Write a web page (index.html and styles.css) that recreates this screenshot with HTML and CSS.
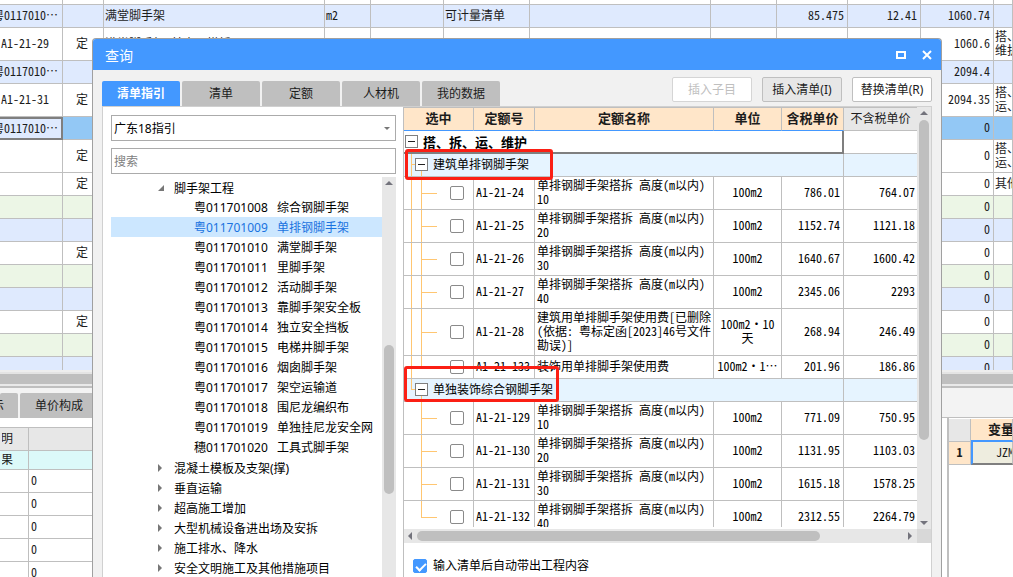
FILE: index.html
```html
<!DOCTYPE html>
<html lang="zh-CN">
<head>
<meta charset="utf-8">
<title>查询</title>
<link rel="stylesheet" href="styles.css">
</head>
<body>
<div class="app">
  <div class="sheet-view">
    <table class="sheet">
      <colgroup><col class="w-code"><col class="w-kind"><col class="w-name"><col class="w-unit"><col class="w-expr"><col class="w-type"><col><col class="w-qty"><col class="w-rate"><col class="w-price"><col class="w-price"><col class="w-note"></colgroup>
      <tbody>
        <tr class="sliver"><td></td><td></td><td></td><td></td><td></td><td></td><td></td><td></td><td></td><td></td><td></td><td></td></tr>
        <tr class="blue"><td><div class="code">粤0117010⋯</div></td><td></td><td>满堂脚手架</td><td>m2</td><td></td><td>可计量清单</td><td></td><td></td><td class="num">85.475</td><td class="num">12.41</td><td class="num">1060.74</td><td></td></tr>
        <tr class="tall"><td><div class="code">A1-21-29</div></td><td class="kind">定</td><td>满堂脚手架 基本层搭拆</td><td></td><td></td><td></td><td></td><td></td><td></td><td></td><td class="num">1060.6</td><td>搭、拆、运、<br>维护</td></tr>
        <tr class="blue"><td><div class="code">粤0117010⋯</div></td><td></td><td></td><td></td><td></td><td></td><td></td><td></td><td></td><td></td><td class="num">2094.4</td><td></td></tr>
        <tr class="tall"><td><div class="code">A1-21-31</div></td><td class="kind">定</td><td></td><td></td><td></td><td></td><td></td><td></td><td></td><td></td><td class="num">2094.35</td><td>搭、拆、<br>运、维护</td></tr>
        <tr class="current"><td class="focus"><div class="code">粤0117010⋯</div></td><td></td><td></td><td></td><td></td><td></td><td></td><td></td><td></td><td></td><td class="num">0</td><td></td></tr>
        <tr class="tall"><td></td><td class="kind">定</td><td></td><td></td><td></td><td></td><td></td><td></td><td></td><td></td><td class="num">0</td><td>搭、拆、<br>运、维护</td></tr>
        <tr><td></td><td class="kind">定</td><td></td><td></td><td></td><td></td><td></td><td></td><td></td><td></td><td class="num">0</td><td>其他</td></tr>
        <tr class="green"><td></td><td></td><td></td><td></td><td></td><td></td><td></td><td></td><td></td><td></td><td class="num">0</td><td></td></tr>
        <tr class="blue"><td></td><td></td><td></td><td></td><td></td><td></td><td></td><td></td><td></td><td></td><td class="num">0</td><td></td></tr>
        <tr><td></td><td class="kind">定</td><td></td><td></td><td></td><td></td><td></td><td></td><td></td><td></td><td class="num">0</td><td></td></tr>
        <tr class="green"><td></td><td></td><td></td><td></td><td></td><td></td><td></td><td></td><td></td><td></td><td class="num">0</td><td></td></tr>
        <tr class="blue"><td></td><td></td><td></td><td></td><td></td><td></td><td></td><td></td><td></td><td></td><td class="num">0</td><td></td></tr>
        <tr><td></td><td class="kind">定</td><td></td><td></td><td></td><td></td><td></td><td></td><td></td><td></td><td class="num">0</td><td></td></tr>
        <tr class="green"><td></td><td></td><td></td><td></td><td></td><td></td><td></td><td></td><td></td><td></td><td class="num">0</td><td></td></tr>
        <tr class="blue"><td></td><td></td><td></td><td></td><td></td><td></td><td></td><td></td><td></td><td></td><td class="num">0</td><td></td></tr>
      </tbody>
    </table>
  </div>
  <div class="sheet-scroll"></div>
  <div class="lower">
    <section class="detail">
      <div class="detail-tabs"><button class="detail-tab first">显示</button><button class="detail-tab">单价构成</button></div>
      <table class="detail-table">
        <tbody>
          <tr class="head"><td><div class="code">说明</div></td><td></td></tr>
          <tr class="result"><td><div class="code">结果</div></td><td></td></tr>
          <tr><td></td><td>0</td></tr>
          <tr><td></td><td>0</td></tr>
          <tr><td></td><td>0</td></tr>
          <tr><td></td><td>0</td></tr>
          <tr><td></td><td>0</td></tr>
        </tbody>
      </table>
    </section>
    <section class="vars">
      <div class="vars-bar"></div>
      <div class="vars-body">
        <table class="vars-table">
          <thead><tr><th class="corner"></th><th class="var-head">变量</th></tr></thead>
          <tbody><tr><th class="row-no">1</th><td class="var-cell">JZMJ</td></tr></tbody>
        </table>
      </div>
    </section>
  </div>
</div>

<div class="dialog" role="dialog" aria-label="查询">
  <header class="title-bar">
    <h1>查询</h1>
    <button class="win-btn" aria-label="最大化"><svg width="12" height="12" viewBox="0 0 12 12"><path d="M2 3h8v6H2z" fill="none" stroke="#fff" stroke-width="2"/></svg></button>
    <button class="win-btn" aria-label="关闭"><svg width="12" height="12" viewBox="0 0 12 12"><path d="M2 2l8 8M10 2l-8 8" fill="none" stroke="#fff" stroke-width="2"/></svg></button>
  </header>
  <div class="toolbar">
    <nav class="tabs">
      <button class="tab active">清单指引</button><button class="tab">清单</button><button class="tab">定额</button><button class="tab">人材机</button><button class="tab">我的数据</button>
    </nav>
    <div class="actions">
      <button class="action" disabled>插入子目</button><button class="action pressed">插入清单(I)</button><button class="action">替换清单(R)</button>
    </div>
  </div>
  <main class="panel">
    <aside class="guide">
      <div class="picker">
        <select class="field" aria-label="指引"><option>广东18指引</option></select>
        <svg class="picker-arrow" width="6" height="3" viewBox="0 0 6 3"><path d="M0 0h6L3 3z" fill="#777"/></svg>
      </div>
      <input class="field" type="text" placeholder="搜索" aria-label="搜索">
      <div class="tree-view">
        <ul class="tree">
          <li class="node open">脚手架工程</li>
          <li class="leaf"><span class="no">粤011701008</span>综合钢脚手架</li>
          <li class="leaf selected"><span class="no">粤011701009</span>单排钢脚手架</li>
          <li class="leaf"><span class="no">粤011701010</span>满堂脚手架</li>
          <li class="leaf"><span class="no">粤011701011</span>里脚手架</li>
          <li class="leaf"><span class="no">粤011701012</span>活动脚手架</li>
          <li class="leaf"><span class="no">粤011701013</span>靠脚手架安全板</li>
          <li class="leaf"><span class="no">粤011701014</span>独立安全挡板</li>
          <li class="leaf"><span class="no">粤011701015</span>电梯井脚手架</li>
          <li class="leaf"><span class="no">粤011701016</span>烟囱脚手架</li>
          <li class="leaf"><span class="no">粤011701017</span>架空运输道</li>
          <li class="leaf"><span class="no">粤011701018</span>围尼龙编织布</li>
          <li class="leaf"><span class="no">粤011701019</span>单独挂尼龙安全网</li>
          <li class="leaf"><span class="no">穗011701020</span>工具式脚手架</li>
          <li class="node">混凝土模板及支架(撑)</li>
          <li class="node">垂直运输</li>
          <li class="node">超高施工增加</li>
          <li class="node">大型机械设备进出场及安拆</li>
          <li class="node">施工排水、降水</li>
          <li class="node">安全文明施工及其他措施项目</li>
        </ul>
        <div class="vscroll"><svg width="8" height="4" viewBox="0 0 8 4"><path d="M0 4h8L4 0z" fill="#73737c"/></svg><div class="thumb tree-thumb"></div></div>
      </div>
    </aside>
    <section class="quota">
      <div class="grid-view">
        <div class="grid-clip">
          <table class="grid">
            <colgroup><col class="g-pick"><col class="g-code"><col><col class="g-unit"><col class="g-price"><col class="g-net"></colgroup>
            <thead><tr><th>选中</th><th>定额号</th><th>定额名称</th><th>单位</th><th>含税单价</th><th class="plain">不含税单价</th></tr></thead>
            <tbody>
              <tr class="root"><td colspan="5"><div class="label"><button class="fold" aria-label="折叠"></button>搭、拆、运、维护</div></td><td></td></tr>
              <tr class="group"><td colspan="5"><div class="label"><button class="fold" aria-label="折叠"></button>建筑单排钢脚手架</div><div class="mark mark-a"></div></td><td></td></tr>
              <tr class="two"><td class="pick outer"><input type="checkbox" aria-label="A1-21-24"></td><td>A1-21-24</td><td>单排钢脚手架搭拆 高度(m以内)<br>10</td><td class="unit">100m2</td><td class="num">786.01</td><td class="num">764.07</td></tr>
              <tr class="two"><td class="pick outer"><input type="checkbox" aria-label="A1-21-25"></td><td>A1-21-25</td><td>单排钢脚手架搭拆 高度(m以内)<br>20</td><td class="unit">100m2</td><td class="num">1152.74</td><td class="num">1121.18</td></tr>
              <tr class="two"><td class="pick outer"><input type="checkbox" aria-label="A1-21-26"></td><td>A1-21-26</td><td>单排钢脚手架搭拆 高度(m以内)<br>30</td><td class="unit">100m2</td><td class="num">1640.67</td><td class="num">1600.42</td></tr>
              <tr class="two"><td class="pick outer"><input type="checkbox" aria-label="A1-21-27"></td><td>A1-21-27</td><td>单排钢脚手架搭拆 高度(m以内)<br>40</td><td class="unit">100m2</td><td class="num">2345.06</td><td class="num">2293</td></tr>
              <tr class="three"><td class="pick outer"><input type="checkbox" aria-label="A1-21-28"></td><td>A1-21-28</td><td>建筑用单排脚手架使用费[已删除<br>(依据: 粤标定函[2023]46号文件<br>勘误)]</td><td class="unit">100m2·10<br>天</td><td class="num">268.94</td><td class="num">246.49</td></tr>
              <tr><td class="pick outer end"><input type="checkbox" aria-label="A1-21-133"></td><td>A1-21-133</td><td>装饰用单排脚手架使用费</td><td class="unit">100m2·1⋯</td><td class="num">201.96</td><td class="num">186.86</td></tr>
              <tr class="group last"><td colspan="5"><div class="label"><button class="fold" aria-label="折叠"></button>单独装饰综合钢脚手架</div><div class="mark mark-b"></div></td><td></td></tr>
              <tr class="two"><td class="pick"><input type="checkbox" aria-label="A1-21-129"></td><td>A1-21-129</td><td>单排钢脚手架搭拆 高度(m以内)<br>10</td><td class="unit">100m2</td><td class="num">771.09</td><td class="num">750.95</td></tr>
              <tr class="two"><td class="pick"><input type="checkbox" aria-label="A1-21-130"></td><td>A1-21-130</td><td>单排钢脚手架搭拆 高度(m以内)<br>20</td><td class="unit">100m2</td><td class="num">1131.95</td><td class="num">1103.03</td></tr>
              <tr class="two"><td class="pick"><input type="checkbox" aria-label="A1-21-131"></td><td>A1-21-131</td><td>单排钢脚手架搭拆 高度(m以内)<br>30</td><td class="unit">100m2</td><td class="num">1615.18</td><td class="num">1578.25</td></tr>
              <tr class="two"><td class="pick end"><input type="checkbox" aria-label="A1-21-132"></td><td>A1-21-132</td><td>单排钢脚手架搭拆 高度(m以内)<br>40</td><td class="unit">100m2</td><td class="num">2312.55</td><td class="num">2264.79</td></tr>
            </tbody>
          </table>
        </div>
        <div class="vscroll"><svg width="8" height="4" viewBox="0 0 8 4"><path d="M0 4h8L4 0z" fill="#73737c"/></svg><div class="thumb grid-thumb"></div><svg class="down" width="8" height="4" viewBox="0 0 8 4"><path d="M0 0h8L4 4z" fill="#73737c"/></svg></div>
      </div>
      <div class="hbar">
        <div class="hscroll"><svg width="4" height="8" viewBox="0 0 4 8"><path d="M4 0v8L0 4z" fill="#73737c"/></svg><div class="track"><div class="hthumb"></div></div><svg width="4" height="8" viewBox="0 0 4 8"><path d="M0 0v8l4-4z" fill="#73737c"/></svg></div>
        <div class="hcorner"></div>
      </div>
      <label class="auto"><input type="checkbox" checked>输入清单后自动带出工程内容</label>
    </section>
  </main>
</div>
</body>
</html>
```
FILE: styles.css
```css
* { box-sizing: border-box; }
html, body { height: 100%; }
body {
  margin: 0;
  overflow: hidden;
  position: relative;
  background: #fff;
  color: #1c1c1c;
  font: 12px/14px "Noto Sans Mono CJK SC", "Noto Sans CJK SC", sans-serif;
}
button, input, select { font: inherit; color: inherit; margin: 0; }
button { border: 0; padding: 0; background: none; }
table { border-collapse: separate; border-spacing: 0; table-layout: fixed; width: 100%; }
td, th { border: 0 solid #bfbfbf; border-width: 0 1px 1px 0; padding: 0 2px 2px; overflow: hidden; white-space: nowrap; vertical-align: middle; text-align: left; font-weight: 400; }
.num { text-align: right; padding-right: 3px; }

/* Main window */
.app { height: 100%; display: flex; flex-direction: column; }
.sheet-view { flex: 0 0 370px; overflow: hidden; }
.w-code { width: 63px; } .w-kind { width: 41px; } .w-name { width: 221px; } .w-unit { width: 46px; }
.w-expr { width: 73px; } .w-type { width: 86px; } .w-qty { width: 66px; } .w-rate { width: 71px; }
.w-price { width: 73px; } .w-note { width: 19px; }
.sheet td { padding-left: 1px; }
.sheet tr { height: 23px; }
.sheet tr.sliver { height: 5px; }
.sheet tr.sliver td { line-height: 1px; }
.sheet tr.tall { height: 33px; }
.sheet .blue { background: #dfeafe; }
.sheet .green { background: #ecf6e6; }
.sheet .current { background: #93c8f5; }
.sheet .kind { text-align: right; padding-right: 15px; }
.sheet td:first-child { padding-left: 0; padding-right: 0; }
.sheet .focus { background: #dfeafe; border: 2px solid #7f7f7f; border-left: 0; }
.code { display: flex; justify-content: center; padding-right: 12px; overflow: hidden; }
.focus .code { padding-right: 11px; }
.sheet-scroll { flex: 0 0 18px; background: #bfbfbf; border-top: 2px solid #eee; border-bottom: 2px solid #bfbfbf; box-shadow: inset 0 2px #e4e4e4, inset 0 -2px #e9e9e9; }
.lower { flex: 1; display: flex; justify-content: space-between; min-height: 0; overflow: hidden; background: #fff; }
.detail { width: 200px; }
.detail-tabs { display: flex; gap: 2px; padding-top: 5px; height: 30px; background: #f3f3f3; }
.detail-tab { width: 78px; height: 25px; background: #bfbfbf; border-radius: 2px 2px 0 0; font-family: "Noto Sans", "Noto Sans CJK SC", sans-serif; }
.detail-tab.first { width: 18px; text-align: right; padding-right: 14px; direction: rtl; overflow: hidden; white-space: nowrap; }
.detail-table { margin-top: 9px; border-top: 1px solid #bfbfbf; }
.detail-table tr { height: 23px; }
.detail-table td:first-child { width: 29px; }
.detail-table .code { justify-content: flex-end; padding-right: 13px; }
.detail-table .head { background: #e7e7e7; }
.detail-table .result { background: #dcf9f9; height: 19px; }
.vars { flex: none; width: 200px; display: flex; flex-direction: column; padding-left: 129px; }
.vars-bar { height: 30px; background: #f3f3f3; border-bottom: 1px solid #bfbfbf; }
.vars-body { flex: 1; margin-left: 5px; border-left: 2px solid #bfbfbf; overflow: hidden; }
.vars-table { margin-top: 1px; }
.vars-table tr { height: 23px; }
.corner { width: 22px; background: #e7e7e7; }
.vars-table .var-head { background: #ffe6c9; border-bottom: 2px solid #4398ff; font-size: 13px; font-weight: 700; padding-left: 17px; }
.vars-table .row-no { background: #ffe6c9; font-weight: 700; text-align: center; }
.vars-table .var-cell { background: #eeeddf; border-left: 2px solid #4398ff; border-bottom: 2px solid #7f7f7f; padding-left: 23px; }

/* Query dialog */
.dialog {
  position: absolute; left: 92px; right: 71px; top: 38px; bottom: 0;
  display: flex; flex-direction: column;
  background: #f1f1f1; border: 1px solid #a0a0a0; border-bottom: 0; border-radius: 4px 4px 0 0; overflow: hidden;
}
.title-bar { flex: none; height: 31px; background: #4398ff; color: #fff; display: flex; align-items: center; gap: 14px; padding: 0 8px 0 12px; }
.title-bar h1 { flex: 1; margin: 0; font: 400 14px/20px "Noto Sans CJK SC", sans-serif; }
.win-btn { width: 12px; height: 12px; display: flex; }
.toolbar { flex: none; height: 36px; display: flex; justify-content: space-between; padding: 0 9px; }
.tabs, .actions, .guide, .auto { font-family: "Noto Sans", "Noto Sans CJK SC", sans-serif; }
.tabs { display: flex; align-items: flex-end; gap: 2px; }
.tab { width: 78px; height: 25px; background: #bfbfbf; border-radius: 2px 2px 0 0; }
.tab.active { background: #4398ff; color: #fff; font-weight: 700; }
.actions { display: flex; gap: 10px; padding-top: 7px; }
.action { width: 80px; height: 25px; background: #fff; border: 1px solid #bfbfbf; border-radius: 2px; white-space: nowrap; }
.action:disabled { color: #bfbfbf; border-color: #d5d5d5; }
.action.pressed { background: #e7e7e7; }
.panel { flex: 1; min-height: 0; display: flex; gap: 7px; margin: 0 9px; background: #fff; border: 1px solid #d0d0d0; border-bottom: 0; }
.guide { width: 285px; margin-left: 8px; padding-top: 8px; display: flex; flex-direction: column; gap: 7px; color: #000; }
.picker { position: relative; display: flex; }
.field { width: 100%; height: 26px; flex: none; appearance: none; background: #fff; border: 1px solid #ababab; border-radius: 0; padding: 1px 2px 0; outline: 0; }
.field::placeholder { color: #808080; opacity: 1; }
.picker-arrow { position: absolute; right: 6px; top: 12px; }
.tree-view { flex: 1; min-height: 0; display: flex; margin-top: -4px; overflow: hidden; }
.tree { flex: 1; margin: 0; padding: 0; list-style: none; overflow: hidden; white-space: nowrap; line-height: 20px; }
.tree li { height: 20px; padding-top: 1px; line-height: 19px; }
.tree .leaf { padding-left: 83px; line-height: 20px; }
.leaf.selected { background: #cce7ff; color: #1a73e0; }
.no { display: inline-block; width: 83px; }
.tree .node { display: flex; align-items: center; padding-left: 47px; padding-top: 2px; }
.node::before { content: ""; width: 4px; height: 8px; margin-right: 12px; background: #777; clip-path: polygon(0 0, 100% 50%, 0 100%); }
.node.open::before { width: 6px; height: 6px; margin-right: 10px; clip-path: polygon(100% 0, 100% 100%, 0 100%); }
.vscroll { flex: none; width: 14px; background: #e7e7e7; display: flex; flex-direction: column; align-items: center; padding-top: 4px; }
.vscroll svg { flex: none; }
.thumb { width: 10px; border-radius: 5px; background: #bfbfbf; }
.tree-thumb { height: 149px; margin-top: 160px; flex: none; }
.grid-thumb { flex: 0 1 320px; margin-top: 5px; }
.down { margin: auto 0 4px; }

/* Quota grid */
.quota { flex: 1; min-width: 0; display: flex; flex-direction: column; border-left: 1px solid #bfbfbf; }
.grid-view { flex: 1; min-height: 0; display: flex; overflow: hidden; }
.grid-clip { flex: 1; min-width: 0; overflow: hidden; border-top: 1px solid #bfbfbf; margin-bottom: 2px; color: #000; }
.g-pick { width: 70px; } .g-code { width: 61px; } .g-unit { width: 68px; } .g-price { width: 62px; } .g-net { width: 73px; }
.grid tr { height: 23px; }
.grid tr.two { height: 33px; }
.grid tr.three { height: 47px; }
.grid th { background: #ffe6c9; border-bottom-color: #4398ff; text-align: center; font-size: 13px; font-weight: 700; color: #1c1c1c; }
.grid th.plain { background: #e7e7e7; font-size: 12px; font-weight: 400; padding: 0 0 2px; border-bottom-color: #bfbfbf; }
.grid td:last-child, .grid th:last-child { border-right: 0; }
.grid td.num:last-child { padding-right: 2px; }
.unit { text-align: center; }
.label { display: flex; align-items: center; gap: 5px; }
.root td:first-child { border-right: 2px solid #7f7f7f; border-bottom: 2px solid #7f7f7f; padding-left: 1px; padding-bottom: 0; font-size: 13px; font-weight: 700; }
.group td { position: relative; overflow: visible; background-color: #e6f4ff; }
.group td:first-child { padding-left: 11px; }
.fold { width: 13px; height: 13px; flex: none; border: 1px solid #7f7f7f; background: linear-gradient(#222, #222) center / 7px 1px no-repeat #fff; }
.grid .pick { padding: 0 0 0 46px; }
.pick, .group td:first-child { background-image: linear-gradient(#ffc671, #ffc671), linear-gradient(#ffc671, #ffc671), linear-gradient(#ffc671, #ffc671); background-repeat: no-repeat; }
.group td:first-child { background-position: 7px 0, 7px 10px, 17px 100%; background-size: 1px 100%, 5px 1px, 1px 5px; }
.group.last td:first-child { background-size: 1px 50%, 5px 1px, 1px 5px; }
.pick { background-position: 17px 0, 17px 50%, 7px 0; background-size: 1px 100%, 16px 1px, 0 0; }
.pick.outer { background-size: 1px 100%, 16px 1px, 1px 100%; }
.pick.end { background-size: 1px 50%, 16px 1px, 0 0; }
.pick.outer.end { background-size: 1px 50%, 16px 1px, 1px 100%; }
input[type="checkbox"] { appearance: none; display: block; flex: none; width: 14px; height: 14px; border: 1px solid #8a8a8a; border-radius: 2px; background: #fff; }
input[type="checkbox"]:checked { border-color: #4398ff; background: #4398ff; position: relative; }
input[type="checkbox"]:checked::after { content: ""; position: absolute; left: 4px; top: 1px; width: 4px; height: 8px; border: solid #fff; border-width: 0 2px 2px 0; transform: rotate(45deg); }
.mark { position: absolute; z-index: 1; border: 3px solid #fb1f14; border-radius: 3px; pointer-events: none; }
.mark-a { left: 1px; top: -5px; width: 148px; height: 31px; }
.mark-b { left: 0; top: -13px; width: 155px; height: 36px; }
.hbar { flex: none; height: 14px; display: flex; }
.hscroll { flex: 1; display: flex; align-items: center; gap: 5px; padding: 0 5px 0 4px; background: #e7e7e7; }
.track { flex: 1; }
.hthumb { width: 83%; height: 10px; border-radius: 5px; background: #bfbfbf; }
.hcorner { width: 14px; background: #d8d8d8; }
.auto { flex: none; height: 34px; display: flex; align-items: center; gap: 6px; padding: 12px 0 0 9px; color: #000; }
```
